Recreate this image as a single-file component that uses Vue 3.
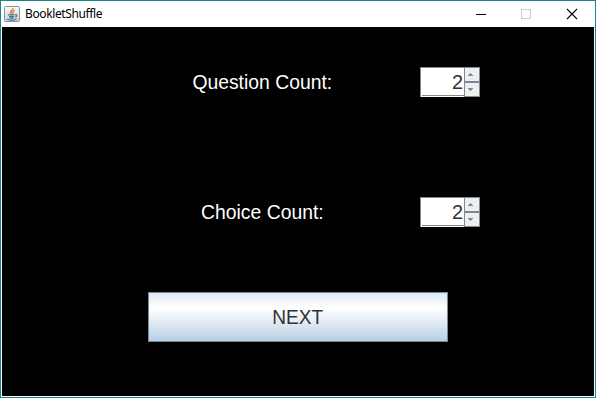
<script setup>
import { ref } from 'vue'

const fields = ref([
  { label: 'Question Count:', value: 2 },
  { label: 'Choice Count:', value: 2 },
])
</script>

<template>
  <div class="window">
    <header class="titlebar">
      <svg class="java" width="16" height="16" viewBox="0 0 16 16">
        <defs>
          <linearGradient id="tile" x1="0" y1="0" x2="0" y2="1">
            <stop offset="0" stop-color="#fafbfc" />
            <stop offset="1" stop-color="#c5d0d9" />
          </linearGradient>
        </defs>
        <rect x=".5" y=".5" width="15" height="15" rx="1" fill="url(#tile)" stroke="#8296a5" />
        <path d="M9 2C9.4 4.3 4.8 4.8 7.3 8M10.8 4.4C7.4 5.5 9.9 6.3 8.2 8" fill="none" stroke="#e87d28" stroke-width="1.5" />
        <path d="M4 8.9H10.5M5 10.6H10M5.8 12.1H9.4M3 13.2C6 14.4 10 14.3 12.6 12.9M11 8.7C13.7 8.3 13.2 10.6 11 11.2" fill="none" stroke="#47718f" stroke-width="1.1" />
      </svg>
      <span class="title">BookletShuffle</span>
      <svg class="controls" width="104" height="14" viewBox="0 0 104 14" fill="none" shape-rendering="crispEdges">
        <path d="M1 7.5H11" stroke="#000" />
        <rect x="46.5" y="2.5" width="9" height="9" stroke="#ccc" />
        <path d="M92 2L102 12M102 2L92 12" stroke="#000" shape-rendering="auto" stroke-width="1.1" />
      </svg>
    </header>
    <main class="content">
      <div v-for="field in fields" :key="field.label" class="row">
        <label class="caption"><span>{{ field.label }}</span></label>
        <div class="spinner">
          <div class="value"><span>{{ field.value }}</span></div>
          <div class="arrows">
            <button class="arrow" @click="field.value++">
              <svg width="5" height="3" viewBox="0 0 5 3" shape-rendering="crispEdges"><path d="M2 0h1v1h1v1h1v1H0V2h1V1h1z" fill="#7a8a99" /></svg>
            </button>
            <button class="arrow" @click="field.value--">
              <svg width="5" height="3" viewBox="0 0 5 3" shape-rendering="crispEdges"><path d="M0 0h5v1H4v1H3v1H2V2H1V1H0z" fill="#7a8a99" /></svg>
            </button>
          </div>
        </div>
      </div>
      <button class="next"><span>NEXT</span></button>
    </main>
  </div>
</template>

<style>
body { margin: 0; background: #fff; }
</style>

<style scoped>
.window {
  box-sizing: border-box;
  width: 596px;
  height: 398px;
  border: 1px solid #1b8488;
  background: #fff;
  display: flex;
  flex-direction: column;
  font-family: "Liberation Sans", Arial, sans-serif;
}
.titlebar {
  height: 26px;
  display: flex;
  align-items: center;
  padding-left: 3px;
  padding-right: 16px;
  box-sizing: border-box;
  flex: none;
}
.java, .controls { display: block; flex: none; }
.controls { margin-top: -1px; }
.title {
  margin-left: 5px;
  font: 12px/16px "Noto Sans", "Open Sans", sans-serif;
  letter-spacing: -0.38px;
  color: #000;
  flex: 1;
}
.content {
  flex: 1;
  margin: 0 1px 1px;
  background: #000;
  padding-top: 40px;
  display: flex;
  flex-direction: column;
}
.row {
  display: flex;
  height: 30px;
  margin-bottom: 100px;
}
.caption {
  width: 300px;
  margin-left: 110px;
  margin-right: 8px;
  text-align: center;
  color: #fff;
  font-size: 20px;
  line-height: 30px;
}
.caption span, .next span, .value span { display: inline-block; }
.caption span { transform: scaleX(0.967); }
.next span { transform: scaleX(0.955); }
.spinner {
  box-sizing: border-box;
  width: 60px;
  height: 30px;
  display: flex;
  background: #fff;
  border-top: 1px solid #7a8a99;
  border-left: 1px solid #7a8a99;
}
.value {
  box-sizing: border-box;
  width: 43px;
  height: 28px;
  margin-left: 1px;
  border-bottom: 1px solid #7a8a99;
  text-align: right;
  padding-right: 2px;
  font-size: 20px;
  line-height: 29px;
  color: #333;
}
.arrows {
  width: 16px;
  margin-left: -1px;
  flex: 1;
  display: flex;
  flex-direction: column;
}
.arrow {
  box-sizing: border-box;
  display: flex;
  align-items: flex-start;
  justify-content: flex-start;
  padding: 5px 0 0 3px;
  margin: 0;
  flex: none;
  height: 14px;
  border: 1px solid #7a8a99;
  border-top: 0;
  background: #eee;
}
.arrow + .arrow { height: 15px; border-top: 1px solid #7a8a99; }
.next {
  box-sizing: border-box;
  width: 300px;
  height: 50px;
  margin: -35px 0 0 146px;
  padding: 0;
  border: 1px solid #7a8a99;
  background: linear-gradient(#dde8f3, #fff 30%, #fff 33%, #b8cfe5);
  font: 20px/48px "Liberation Sans", Arial, sans-serif;
  color: #333;
}
</style>
